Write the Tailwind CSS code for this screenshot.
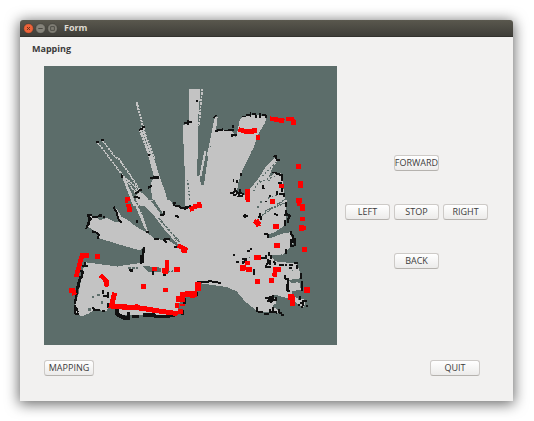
<!DOCTYPE html>
<html lang="en">
<head>
<meta charset="utf-8">
<meta name="viewport" content="width=device-width, initial-scale=1">
<title>Form</title>
<script src="https://cdn.jsdelivr.net/npm/@tailwindcss/browser@4"></script>
</head>
<body class="flex min-h-screen flex-col bg-white p-5 pr-[21px] font-['Open_Sans','Noto_Sans',sans-serif] text-[9px] leading-3 text-[#3c3c3c]">
<main class="flex flex-1 flex-col rounded-t-[3px] bg-[#f2f1f0] shadow-[0_2px_14px_1px_rgba(0,0,0,0.6)]">
  <header class="flex h-[17px] items-center gap-px rounded-t-[3px] border-b border-[#33322e] bg-linear-to-b from-[#5a584e] to-[#3f3e39] pl-[3px]">
    <button type="button" aria-label="Close" class="size-[11px]">
      <svg viewBox="0 0 10 10" class="size-full"><circle cx="5" cy="5" r="4.4" fill="#ee6339" stroke="#3a352f" stroke-width=".5"/><path d="M3.7 3.7l2.6 2.6M6.3 3.7l-2.6 2.6" stroke="#65301c" stroke-width=".9"/></svg>
    </button>
    <button type="button" aria-label="Minimize" class="size-[11px]">
      <svg viewBox="0 0 10 10" class="size-full"><circle cx="5" cy="5" r="4.4" fill="#85837a" stroke="#393833" stroke-width=".5"/><path d="M3 5h4" stroke="#4a4943" stroke-width=".9"/></svg>
    </button>
    <button type="button" aria-label="Maximize" class="size-[11px]">
      <svg viewBox="0 0 10 10" class="size-full"><circle cx="5" cy="5" r="4.4" fill="#7f7d74" stroke="#393833" stroke-width=".5"/><path d="M3.3 3.3h3.4v3.4H3.3z" fill="none" stroke="#4a4943" stroke-width=".8"/></svg>
    </button>
    <h1 class="pl-[5px] font-bold text-[#dfdbd2]">Form</h1>
  </header>
  <div class="flex flex-col pt-[6px] pr-[25px] pl-3">
    <h2 class="font-bold">Mapping</h2>
    <div class="flex gap-2 pt-[11px] pl-3">
      <svg role="img" aria-label="Occupancy map" viewBox="132 199 879 837" class="w-[293px] shrink-0" shape-rendering="crispEdges">
        <path fill="#5c6d6a" d="M132 199h879v837H132z"/>
        <!-- free space, upper left -->
        <g transform="translate(120 180)">
          <g fill="#c3c3c3">
            <path d="M300 205L312 200L330 270L343 300L359 350L378 405L386 440H342L332 388L334 368L342 352L328 300Z"/>
            <path d="M428 197L450 190V440H439Z"/>
            <path d="M287 408L300 395L320 412L336 440H292Z"/>
            <path d="M246 352L256 355L264 378L292 440H280Z"/>
          </g>
          <path d="M290 128L310 205M299 210L333 300M309 207L345 300" fill="none" stroke="#c3c3c3" stroke-width="6" stroke-dasharray="7 2"/>
          <path d="M173 249L192 273L218 308L262 365L290 404M188 243L225 292L236 297L266 340L300 392M250 350L285 379L293 400" fill="none" stroke="#c3c3c3" stroke-width="5" stroke-dasharray="7 2"/>
          <path d="M306 214L331 285M313 211L337 280M262 370L286 415" fill="none" stroke="#5c6d6a" stroke-width="3" stroke-dasharray="4 5"/>
        </g>
        <!-- free space, upper right -->
        <g transform="translate(555 180)">
          <path fill="#c3c3c3" d="M0 190H13V88H44V120L39 180V270L35 345L44 350L48 376L56 374L63 300L90 170L98 172L93 210L140 212L152 232L160 205L162 185L172 172L205 165L245 170L240 190L222 220L210 255L195 285L175 325L160 370L155 400L180 405L218 360L240 325L272 290L280 300L262 325L250 355L270 340L295 342L293 380L300 405L296 440H0Z"/>
          <path fill="none" stroke="#c3c3c3" stroke-width="5" stroke-dasharray="7 3" d="M52 88L46 150L42 200"/>
          <path fill="none" stroke="#c3c3c3" stroke-width="6" d="M61 275L46 350"/>
          <path fill="none" stroke="#5c6d6a" stroke-width="5" d="M44 215L40 348M67 290L54 376"/>
          <path fill="none" stroke="#5c6d6a" stroke-width="4" stroke-dasharray="5 6" d="M232 350L275 305M205 395L225 362M225 367L270 350M250 360l6 10M8 360l6 60M38 265h5M38 290h5M74 260h5M178 330L165 375M238 195L180 322M250 415L298 400"/>
        </g>
        <!-- free space, lower left -->
        <g transform="translate(120 600)">
          <path fill="#c3c3c3" d="M145 48L168 52L180 62L200 55L228 68L240 66L224 28L232 30L245 52L262 60L290 82L322 100L345 118L385 122L420 145L400 110L352 30L335 0H455V280L425 285L410 345L215 322L205 320L200 335L165 330L145 342L125 350L106 340L104 320L115 285L130 205L137 188L230 200L303 190L310 145L298 152L240 135L175 115L172 100L145 82Z"/>
          <path fill="#c3c3c3" d="M278 0H292L326 100L318 96Z"/>
          <path fill="#c3c3c3" d="M298 0H338L380 70L410 130L390 112L345 52Z"/>
          <path fill="#c3c3c3" d="M230 328H400V346H240Z"/>
          <path fill="#5c6d6a" d="M296 15L318 28L340 58L392 110L398 120L345 112L335 92L320 58ZM342 0L370 43L362 43L334 5ZM389 0L400 15L435 28L450 20V0ZM308 198L362 204V218L325 217Z"/>
          <path fill="none" stroke="#5c6d6a" stroke-width="5" stroke-dasharray="8 3" d="M265 12L305 78L322 98M355 55L420 128M285 0L322 70M232 188v14M265 205h28M370 218l35 -4"/>
          <path fill="none" stroke="#5c6d6a" stroke-width="7" d="M155 291h7M172 286h7M145 329h7M182 308h6"/>
        </g>
        <!-- free space, lower right -->
        <g transform="translate(555 600)">
          <path fill="#c3c3c3" d="M0 0H305L303 65L298 78L255 108L315 98L325 130L310 150L295 165L260 172L270 185L335 192L343 210L348 235L318 242L345 250L347 270L322 275L318 290L360 300L358 322L338 315L325 300L265 285L275 310L262 318L290 342L215 335L205 325L180 305L155 275L125 262L40 250L35 282L0 285Z"/>
          <path fill="#5c6d6a" d="M245 106L298 88L305 96L255 116ZM258 168L292 164L310 185L275 184ZM310 240L350 238V247L318 250ZM270 284L312 302L320 318L275 302Z"/>
          <path fill="none" stroke="#5c6d6a" stroke-width="4" stroke-dasharray="7 2" d="M230 48L265 24L300 10M240 35L260 24M275 15L300 0"/>
          <path fill="none" stroke="#5c6d6a" stroke-width="5" d="M217 22h5M226 6h5M191 173h5M290 182h5M320 212h5M340 297h5"/>
        </g>
        <!-- occupied cells -->
        <g fill="none" stroke="#111" stroke-width="6" stroke-linecap="square" stroke-linejoin="bevel">
          <path transform="translate(120 180)" d="M172 248h1M187 241h1M245 347l2 6M299 210l6 -2M310 202h1M328 286v1M333 356h8l2 -5h12M336 354h18M327 383l6 -3M289 400l6 -4M300 391h4M286 411h4M296 414h1M404 431h1M434 190h8l2 -4"/>
          <path transform="translate(555 180)" stroke-width="5" d="M0 190h8l4 -4h5M8 184v8M35 124h1M88 173l5 -5M91 214h5M97 211h12M112 208v3M119 212h8M132 210h12M143 197v6M140 224v6M147 226h5M174 170h7M185 165h7M196 159v10M204 162h7M213 167v5M225 162v10M234 166h8v6M267 290l6 -2v7M276 300h5M167 342v3M145 360v4M155 364v3M150 387v2M138 400h8l3 -6h7v6l10 -3 8 6M145 406h6l7 -5 6 8h8M158 410h14M165 390v10M233 378v8h5M262 338h8l4 5h8M275 341l8 5h9M290 350v12M282 370h6M291 382v12M285 402h12M275 396v6M297 405v5M253 408h3M241 425h1"/>
          <path transform="translate(120 600)" d="M144 46h9M145 49l8 8-7 10-3 9-4 10M148 54v20M160 52h10M177 48h5M192 52h1M181 45h1M159 96l14 4 3 6-2 9M222 24l2 6M229 35l2 10M233 50l3 9 6 8M292 65v1M322 98h1M345 118h10M372 121l7 6M376 118h11M363 45h8l1 -8M408 48l6 4M403 11v6M408 20h10l7 6h9l4 -3M447 22h3M312 146v12l-4 4v16l-5 4v8M308 150v38M304 168v20M270 210h8l-3 5M340 214v8M371 226h5M404 142h8M135 190v8M130 200h12M124 214h5l-3 20h-5l-3 15M127 216v12M121 232l-5 26M117 240l-4 24M111 263v20M108 290v12M104 300v10M106 318v26h9M109 324l4 12M160 325l5 6h12M162 332h8M188 334h4M190 275v5M204 280v6M192 288h9l3 5M203 312v9"/>
          <path transform="translate(120 600)" stroke-width="11" d="M230 334v8l10 8h10M240 348l8 6h15M265 342v10M280 350h12M322 346h20l5 4h38M315 345h24M390 345h8"/>
          <path transform="translate(120 600)" stroke-width="8" d="M428 335v6M434 300v8"/>
          <path transform="translate(555 600)" d="M0 28l6 -4 8 -5M176 50h10M181 46v5M226 42v5M222 51h7v6M270 42l5 4M304 10v8M302 34v8l10 4v8M300 46l15 2M300 65v10M308 58v8M240 103h8v7M249 112h1M318 98l2 8M324 108v20M319 122v14M329 118v18M318 139h5M304 150v10M147 166h1M198 149h1M190 155h1M157 186h3M174 178h6v8M173 186v4M182 178v4M231 174h7M251 160v6M242 170v5M259 170v6M250 180v10l-6 6v6M256 184v8M266 187l4 4v3M249 202h5M206 212v10M286 197l7 -1M302 195v2M315 195h5M331 190h5M337 200v6M316 205h2M347 222v12M301 230v8l8 2v12M308 237v37h4M350 248v24M307 255v15M242 296h8l8 -6v18M252 300h20M265 290v10M250 305h12M272 296v4M345 293v6M355 303h8M349 311h6v5M341 315h1M350 323h1M365 320h1M217 325v8M222 337h10M239 342h10M255 332v6M265 325v10l8 3M262 338h8M282 330v6M292 345h1M286 340h1"/>
          <path transform="translate(555 600)" d="M38 248h12M56 246l12 1M73 244h6M84 247h8l14 3M0 305v4M37 280v6M33 256h10"/>
        </g>
        <!-- sensor returns -->
        <g fill="none" stroke="#f00" stroke-width="14">
          <path transform="translate(120 180)" d="M254 418h17"/>
          <path transform="translate(120 600)" d="M254 3h11M265 12v10M269 22v15M119 168h15M134 167h14M126 168L108 232M166 171h15M87 272h16M98 266l6 20M180 227l9 6 10 12 2 16M303 260h15M368 271h16M335 208h15M365 212h18M381 181v34M370 216h15M402 210h19M413 137l17 8 10 8M425 140l8 18"/>
          <path transform="translate(120 600)" stroke-width="15" d="M224 279L214 319L280 325M208 318L300 325L350 333L413 342M284 319l20 8M420 283h30M426 288v18M415 290v16M406 318h12M428 312v6M415 334h15"/>
          <path transform="translate(555 180)" d="M255 177l15 2 28 5M303 178h18l5 8v9M160 209l20 6h27M202 212h15M213 234h13M333 321h15M341 371h13M347 364v20M333 422h17M342 415v20M282 379h15M256 427h15M188 388v34M179 402h16M37 435h12"/>
          <path transform="translate(555 600)" d="M0 142v18M14 29l12 -3M24 22l14 -3 12 0M182 0h12M256 6h15M334 3h15M342 0v20M352 12v22M345 58h16M344 85h18M350 76v18M350 150h17M208 64l18 10M215 60l5 20M264 80h17M266 138h18M208 174h19M180 190h15M166 204h16M173 195v20M184 209h16M210 246h16M251 242h16M265 210h22M272 206l-4 25"/>
          <path transform="translate(555 600)" stroke-width="17" d="M39 248v25M0 283h36M15 287h15M358 271h18M318 284v18M322 290v29"/>
        </g>
      </svg>
      <div class="grid grid-cols-[repeat(3,45px)] content-start gap-x-1 gap-y-[33px] pt-[89px]">
        <button type="button" class="col-start-2 flex h-4 items-center justify-center rounded-[3px] border border-[#cdcac7] border-b-[#b5b2ae] bg-linear-to-b from-white to-[#ecebea]">FORWARD</button>
        <button type="button" class="col-start-1 flex h-4 items-center justify-center rounded-[3px] border border-[#cdcac7] border-b-[#b5b2ae] bg-linear-to-b from-white to-[#ecebea]">LEFT</button>
        <button type="button" class="flex h-4 items-center justify-center rounded-[3px] border border-[#cdcac7] border-b-[#b5b2ae] bg-linear-to-b from-white to-[#ecebea]">STOP</button>
        <button type="button" class="flex h-4 items-center justify-center rounded-[3px] border border-[#cdcac7] border-b-[#b5b2ae] bg-linear-to-b from-white to-[#ecebea]">RIGHT</button>
        <button type="button" class="col-start-2 flex h-4 items-center justify-center rounded-[3px] border border-[#cdcac7] border-b-[#b5b2ae] bg-linear-to-b from-white to-[#ecebea]">BACK</button>
      </div>
    </div>
    <div class="flex justify-between pt-[15px] pr-2 pl-3">
      <button type="button" class="flex h-4 w-[50px] items-center justify-center rounded-[3px] border border-[#cdcac7] border-b-[#b5b2ae] bg-linear-to-b from-white to-[#ecebea]">MAPPING</button>
      <button type="button" class="flex h-4 w-[50px] items-center justify-center rounded-[3px] border border-[#cdcac7] border-b-[#b5b2ae] bg-linear-to-b from-white to-[#ecebea]">QUIT</button>
    </div>
  </div>
</main>
</body>
</html>
